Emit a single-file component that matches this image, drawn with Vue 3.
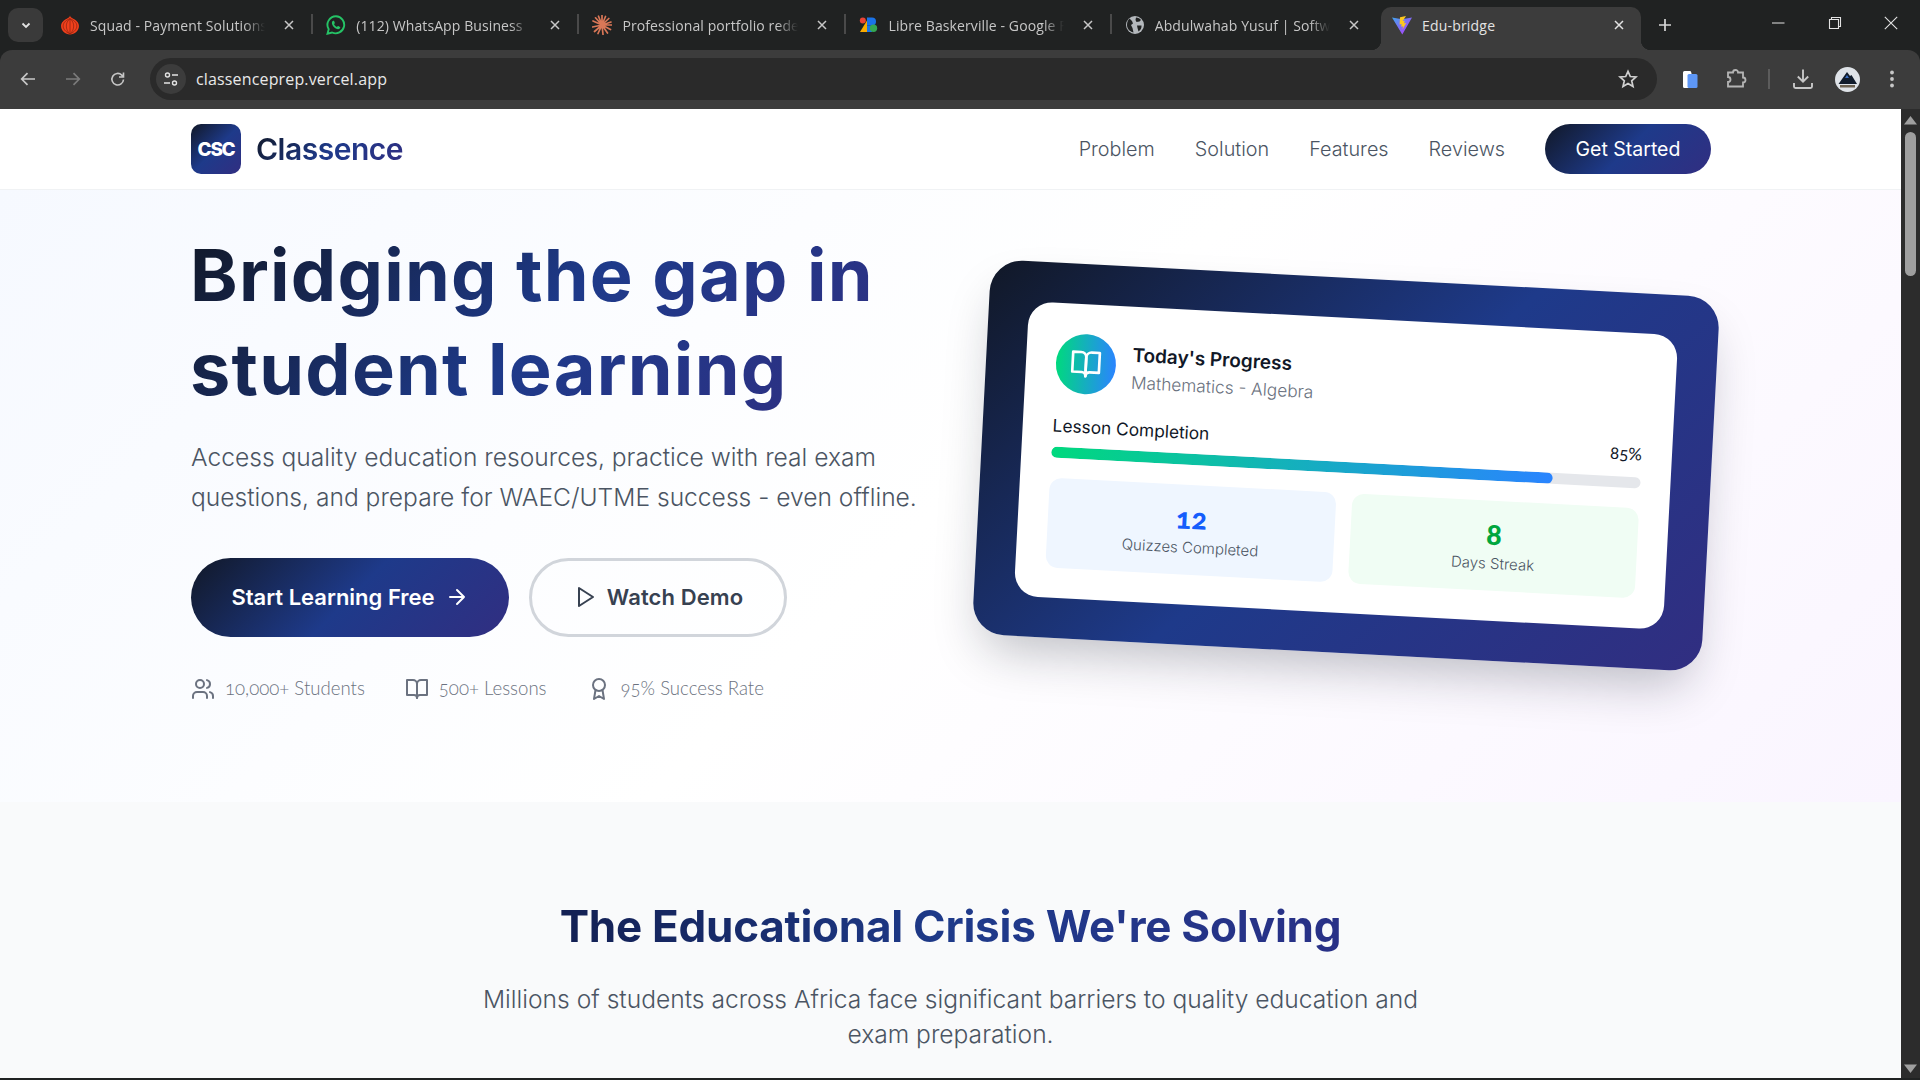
<script setup>
const tabs = [
  { id: 'onion', title: 'Squad - Payment Solutions for Africa' },
  { id: 'wa', title: '(112) WhatsApp Business' },
  { id: 'spark', title: 'Professional portfolio redesign' },
  { id: 'gf', title: 'Libre Baskerville - Google Fonts' },
  { id: 'globe', title: 'Abdulwahab Yusuf | Software Engineer' },
  { id: 'vite', title: 'Edu-bridge', active: true }
]
const links = ['Problem', 'Solution', 'Features', 'Reviews']
</script>

<template>
  <div class="window">
    <div class="strip">
      <button class="tab-search">
        <svg width="12" height="12" viewBox="0 0 12 12"><path d="M2.500 4.500 6 8l3.500-3.500" fill="none" stroke="#e3e3e3" stroke-width="1.800"/></svg>
      </button>
      <div v-for="(t, i) in tabs" :key="t.id" class="tab" :class="{ active: t.active, sep: i < 4 }">
        <svg v-if="t.id === 'onion'" class="fav" viewBox="1 .5 18 19">
          <path d="M10 1c.4 1.700 1.500 2.300 3 3 3 1.300 5.500 3.700 5.500 7 0 4.500-4 8-8.500 8s-8.500-3.500-8.500-8c0-3.300 2.500-5.700 5.500-7 1.500-.7 2.600-1.300 3-3z" fill="#f0401c"/>
          <path d="M10 4c-2.500 2-3.500 4.500-3.500 7s1 5.500 3.500 7.500M10 4c2.500 2 3.500 4.500 3.500 7s-1 5.500-3.500 7.500M10 4v15M10 4c-5 2-6.500 4.500-6.500 7s2 5.500 6.500 7.500M10 4c5 2 6.500 4.500 6.500 7s-2 5.500-6.500 7.500" fill="none" stroke="#8f2410" stroke-width=".7"/>
        </svg>
        <svg v-else-if="t.id === 'wa'" class="fav" viewBox="0 0 20 20">
          <path d="M10 1.300a8.500 8.500 0 0 0-7.300 12.900L1.500 18.700l4.600-1.200A8.500 8.500 0 1 0 10 1.300z" fill="none" stroke="#25c366" stroke-width="1.900"/>
          <path d="M7.300 5.800c-.5 0-1.400.8-1.400 2.200 0 2.700 3.400 6.200 6.200 6.200 1.400 0 2.200-1 2.200-1.700 0-.3-.1-.5-.3-.6l-1.700-.9c-.3-.1-.5 0-.7.200l-.6.800c-1.300-.5-2.500-1.600-3-2.900l.7-.7c.2-.2.200-.4.100-.6l-.7-1.700c-.1-.2-.3-.3-.8-.3z" fill="#25c366"/>
        </svg>
        <svg v-else-if="t.id === 'spark'" class="fav" viewBox="0 0 20 20">
          <path d="M10 10 10 .5M10 10l3.500-8.500M10 10l6.800-6.500M10 10l9-3M10 10h9.500M10 10l8.500 4.500M10 10l5.500 8M10 10l1 9.500M10 10l-4 8.500M10 10l-7.500 6.500M10 10l-9.500 2M10 10 1 6M10 10 3.500 2.800M10 10 6.500 1.200" stroke="#d97757" stroke-width="1.700" stroke-linecap="round"/>
        </svg>
        <svg v-else-if="t.id === 'gf'" class="fav" viewBox="0 0 20 20">
          <path d="M8 5.500 1 17h7z" fill="#f9ab00"/>
          <circle cx="3.800" cy="5.500" r="3" fill="#ea4335"/>
          <path d="M8 2.500h5a4 4 0 0 1 0 8H8z" fill="#1a73e8"/>
          <path d="M8 10.500V17h5v-6.500z" fill="#1a73e8"/>
          <circle cx="14.500" cy="13.300" r="3.700" fill="#34a853"/>
        </svg>
        <svg v-else-if="t.id === 'globe'" class="fav" viewBox="0 0 20 20">
          <circle cx="10" cy="10" r="9" fill="#b4b8bc"/>
          <path d="M4.500 3.500 7 6l1 2.500-2 1.500 1.500 3 1 4.500C4 16.500 2 13 2 10s1-5 2.500-6.500zM11 2.500c2 0 4 1 5 2.500l-1.500 1.500-3 .5-1-2zM12 10.500h4.500c.3 2.500-1 4.500-3 6l-1-3.500z" fill="#202222"/>
        </svg>
        <svg v-else class="fav" viewBox="0 0 20 20">
          <defs>
            <linearGradient id="vt" x1="0" y1="0" x2="1" y2="1"><stop offset="0" stop-color="#41a5ee"/><stop offset="1" stop-color="#bd34fe"/></linearGradient>
          </defs>
          <path d="M0 2.500 10 4.300 20 2.500 10.300 19.500z" fill="url(#vt)"/>
          <path d="M14 1 8 2.200 7.600 9.500l2-.4-.4 2.600 1.900-.5-.6 3.300 3.700-6.600-2.100.4.600-2.500-2 .3z" fill="#fdc81e"/>
        </svg>
        <span class="tab-title">{{ t.title }}</span>
        <svg class="tab-x" viewBox="0 0 12 12"><path d="M2 2l8 8M10 2l-8 8" stroke="currentColor" stroke-width="1.500"/></svg>
      </div>
      <svg class="plus" viewBox="0 0 14 14"><path d="M7 1v12M1 7h12" stroke="#d6d6d6" stroke-width="1.700"/></svg>
      <div class="caption">
        <svg viewBox="0 0 14 14"><path d="M1 7h12.500" stroke="#e3e3e3" stroke-width="1"/></svg>
        <svg viewBox="0 0 14 14"><path d="M1.500 3.500h9v9h-9zM3.500 3.500v-2h9v9h-2" fill="none" stroke="#e3e3e3" stroke-width="1.100"/></svg>
        <svg viewBox="0 0 14 14"><path d="M.8.800l12.400 12.400M13.200.800.800 13.200" stroke="#e3e3e3" stroke-width="1.100"/></svg>
      </div>
    </div>

    <div class="toolbar">
      <svg class="tool" viewBox="0 0 18 18"><path d="M16 9H3M8.500 3.200 2.700 9l5.800 5.800" fill="none" stroke="#c7c7c7" stroke-width="1.700"/></svg>
      <svg class="tool" viewBox="0 0 18 18"><path d="M2 9h13M9.500 3.200 15.300 9l-5.800 5.800" fill="none" stroke="#7b7b7b" stroke-width="1.700"/></svg>
      <svg class="tool" viewBox="0 0 18 18"><path d="M14.500 9.500a5.800 5.800 0 1 1-1.700-4.400L14.500 7M14.500 2.500V7H10" fill="none" stroke="#c7c7c7" stroke-width="1.600"/></svg>
      <div class="omnibox">
        <span class="site-chip">
          <svg width="16" height="16" viewBox="0 0 16 16"><circle cx="4.500" cy="4" r="2" fill="none" stroke="#e3e3e3" stroke-width="1.400"/><path d="M9 4h6M1 12h6" stroke="#e3e3e3" stroke-width="1.400"/><circle cx="11.500" cy="12" r="2" fill="none" stroke="#e3e3e3" stroke-width="1.400"/></svg>
        </span>
        <span class="url">classenceprep.vercel.app</span>
        <svg class="star" viewBox="0 0 20 20"><path d="M10 2.300l2.300 5.200 5.700.5-4.300 3.800 1.300 5.600-5-3-5 3 1.300-5.600L2 8l5.700-.5z" fill="none" stroke="#d0d0d0" stroke-width="1.700"/></svg>
      </div>
      <div class="tools-right">
        <svg width="20" height="20" viewBox="0 0 20 20"><path d="M3 3.500A1.500 1.500 0 0 1 4.500 2h6l1 2v15H4.500A1.500 1.500 0 0 1 3 17.500z" fill="#fff"/><rect x="7.500" y="5" width="10" height="14" rx="1.500" fill="#5e97f6"/></svg>
        <svg width="22" height="22" viewBox="0 0 22 22"><path d="M3 5h5a2.500 2.500 0 0 1 5 0h5v5a2.500 2.500 0 0 1 0 5v4H3v-4.500a2.500 2.500 0 0 0 0-5z" fill="none" stroke="#b5b5b5" stroke-width="1.800" transform="translate(0 -.5)"/></svg>
        <span class="tool-sep"></span>
        <svg width="22" height="22" viewBox="0 0 22 22"><path d="M11 1.500v12M5.800 8.500 11 13.700l5.200-5.200M2 15v3.500a1.500 1.500 0 0 0 1.500 1.500h15a1.500 1.500 0 0 0 1.500-1.500V15" fill="none" stroke="#c7c7c7" stroke-width="1.900"/></svg>
        <svg class="me" width="25" height="25" viewBox="0 0 25 25"><circle cx="12.500" cy="12.500" r="12.500" fill="#dfe3e8"/><path d="M3.500 17 12 5l3 4 1.500-1L22 17z" fill="#111c2c"/><path d="M10 11l2-3 2 3z" fill="#3b6fc4"/><rect x="5" y="18" width="15" height="2.500" fill="#6d6353"/></svg>
        <svg width="6" height="18" viewBox="0 0 6 18"><circle cx="3" cy="2.500" r="1.900" fill="#c7c7c7"/><circle cx="3" cy="9" r="1.900" fill="#c7c7c7"/><circle cx="3" cy="15.500" r="1.900" fill="#c7c7c7"/></svg>
      </div>
    </div>

    <div class="viewport">
      <div class="page">
        <header class="nav">
          <div class="brand">
            <span class="mark">CSC</span>
            <span class="wordmark">Classence</span>
          </div>
          <nav class="links">
            <a v-for="l in links" :key="l">{{ l }}</a>
            <span class="cta">Get Started</span>
          </nav>
        </header>

        <section class="hero">
          <div class="hero-left">
            <h1>Bridging the gap in student learning</h1>
            <p class="lede">Access quality education resources, practice with real exam questions, and prepare for WAEC/UTME success - even offline.</p>
            <div class="actions">
              <span class="btn primary">
                Start Learning Free
                <svg width="24" height="24" viewBox="0 0 24 24" class="ic"><path d="M5 12h14M12 5l7 7-7 7"/></svg>
              </span>
              <span class="btn ghost">
                <svg width="24" height="24" viewBox="0 0 24 24" class="ic"><polygon points="6 3 20 12 6 21 6 3"/></svg>
                Watch Demo
              </span>
            </div>
            <div class="facts">
              <span class="fact">
                <svg width="24" height="24" viewBox="0 0 24 24" class="ic"><path d="M16 21v-2a4 4 0 0 0-4-4H6a4 4 0 0 0-4 4v2"/><circle cx="9" cy="7" r="4"/><path d="M22 21v-2a4 4 0 0 0-3-3.870M16 3.130a4 4 0 0 1 0 7.750"/></svg>
                <span class="fact-text">10,000+ Students</span>
              </span>
              <span class="fact">
                <svg width="24" height="24" viewBox="0 0 24 24" class="ic"><path d="M2 3h6a4 4 0 0 1 4 4v14a3 3 0 0 0-3-3H2z"/><path d="M22 3h-6a4 4 0 0 0-4 4v14a3 3 0 0 1 3-3h7z"/></svg>
                <span class="fact-text">500+ Lessons</span>
              </span>
              <span class="fact">
                <svg width="24" height="24" viewBox="0 0 24 24" class="ic"><circle cx="12" cy="8" r="6"/><path d="M15.477 12.890 17 22l-5-3-5 3 1.523-9.110"/></svg>
                <span class="fact-text">95% Success Rate</span>
              </span>
            </div>
          </div>

          <div class="showcase">
            <div class="frame">
              <div class="panel">
                <div class="panel-head">
                  <span class="avatar">
                    <svg width="32" height="32" viewBox="0 0 24 24" class="ic"><path d="M2 3h6a4 4 0 0 1 4 4v14a3 3 0 0 0-3-3H2z"/><path d="M22 3h-6a4 4 0 0 0-4 4v14a3 3 0 0 1 3-3h7z"/></svg>
                  </span>
                  <div class="panel-text">
                    <div class="panel-title">Today's Progress</div>
                    <div class="panel-sub">Mathematics - Algebra</div>
                  </div>
                </div>
                <div class="progress-label"><span>Lesson Completion</span><span class="pct">85%</span></div>
                <div class="track"><div class="fill" :style="{ width: '85%' }"></div></div>
                <div class="tiles">
                  <div class="tile blue"><strong>12</strong><span>Quizzes Completed</span></div>
                  <div class="tile green"><strong>8</strong><span>Days Streak</span></div>
                </div>
              </div>
            </div>
          </div>
        </section>

        <section class="crisis">
          <h2>The Educational Crisis We're Solving</h2>
          <p>Millions of students across Africa face significant barriers to quality education and exam preparation.</p>
        </section>
      </div>

      <div class="scrollbar">
        <svg width="13" height="10" viewBox="0 0 13 10"><path d="M6.500 1 13 9.500H0z" fill="#9f9f9f"/></svg>
        <span class="thumb"></span>
        <svg class="down" width="13" height="10" viewBox="0 0 13 10"><path d="M6.500 9 13 .5H0z" fill="#9f9f9f"/></svg>
      </div>
    </div>
  </div>
</template>

<style>
html, body { margin: 0; background: #202222; }
</style>

<style scoped>
.window { width: 1920px; height: 1080px; overflow: hidden; display: flex; flex-direction: column; background: #202222; font-family: Inter, Lato, sans-serif; }

.strip { height: 50px; display: flex; align-items: flex-end; flex: none; padding-left: 8px; box-sizing: border-box; }
.tab-search { width: 35px; height: 34px; align-self: flex-start; margin-top: 8px; border: 0; border-radius: 10px; background: #3a3a3a; display: flex; align-items: center; justify-content: center; padding: 0; flex: none; }
.tab { width: 266.200px; height: 43px; box-sizing: border-box; padding: 0 12px 7px 11px; display: flex; align-items: center; color: #c7c7c7; position: relative; flex: none; font: 14px "Open Sans", sans-serif; letter-spacing: .1px; }
.tab:first-of-type { margin-left: 6px; }
.tab.sep::after { content: ""; position: absolute; right: 2px; top: 7px; width: 2px; height: 20px; background: #4a4a4a; }
.tab.active { width: 260px; background: #3c3c3c; border-radius: 10px 10px 0 0; color: #e3e3e3; margin-left: 1px; letter-spacing: .2px; }
.tab.active::before { content: ""; position: absolute; left: -10px; bottom: 0; width: 10px; height: 10px; background: radial-gradient(circle at 0 0, transparent 10px, #3c3c3c 10.500px); }
.tab.active::after { content: ""; position: absolute; right: -10px; bottom: 0; width: 10px; height: 10px; background: radial-gradient(circle at 100% 0, transparent 10px, #3c3c3c 10.500px); }
.fav { width: 20px; height: 20px; flex: none; }
.tab-title { flex: 1; min-width: 0; white-space: nowrap; overflow: hidden; margin-left: 10px; -webkit-mask-image: linear-gradient(90deg, #000 88%, transparent 100%); mask-image: linear-gradient(90deg, #000 88%, transparent 100%); }
.active .tab-title { -webkit-mask-image: none; mask-image: none; }
.tab-x { width: 12px; height: 12px; flex: none; margin-left: 18px; margin-right: 8px; }
.active .tab-x { margin-right: 4px; }
.plus { width: 14px; height: 14px; margin: 0 0 18px 17px; flex: none; }
.caption { margin-left: auto; align-self: flex-start; display: flex; gap: 42px; padding: 16px 22px 0 0; }
.caption svg { width: 14px; height: 14px; }
.caption svg:first-child { margin-right: 1px; }

.toolbar { height: 59px; flex: none; background: #3c3c3c; border-radius: 12px 12px 0 0; display: flex; align-items: center; padding: 0 0 1px 19px; box-sizing: border-box; }
.tool { width: 18px; height: 18px; margin-right: 27px; flex: none; }
.tool:nth-child(3) { margin-right: 23px; }
.omnibox { width: 1507px; height: 42px; background: #2a2a2a; border-radius: 21px; display: flex; align-items: center; padding: 0 19px 0 6px; box-sizing: border-box; flex: none; }
.site-chip { width: 30px; height: 30px; border-radius: 50%; background: #3c3c3c; display: flex; align-items: center; justify-content: center; flex: none; }
.url { color: #e8e8e8; font: 16px "Open Sans", sans-serif; letter-spacing: .15px; margin-left: 10px; }
.star { width: 20px; height: 20px; margin-left: auto; }
.tools-right { display: flex; align-items: center; margin-left: 23px; }
.tools-right > :nth-child(2) { margin-left: 25px; }
.tool-sep { width: 2px; height: 20px; background: #5c5c5c; margin-left: 21px; }
.tools-right > :nth-child(4) { margin-left: 22px; }
.me { margin-left: 21px; }
.tools-right > :nth-child(6) { margin-left: 29px; }

.viewport { height: 969px; flex: none; display: flex; background: #f9fafb; }
.page { width: 1901px; flex: none; overflow: hidden; height: 969px; }
.scrollbar { width: 19px; background: #2c2c2c; display: flex; flex-direction: column; align-items: center; padding-top: 6px; box-sizing: border-box; }
.thumb { width: 11px; height: 144px; border-radius: 6px; background: #9f9f9f; margin-top: 7px; }
.down { margin-top: auto; margin-bottom: 4px; }

.nav { height: 81px; box-sizing: border-box; background: #fff; border-bottom: 1px solid #f0f2f4; padding: 15px 190px 0 191px; display: flex; justify-content: space-between; align-items: flex-start; }
.brand { display: flex; align-items: center; gap: 15px; }
.mark { width: 50px; height: 50px; border-radius: 10px; background: linear-gradient(135deg, #111827, #1e3a8a 50%, #312e81); color: #fff; font-weight: 800; font-size: 19px; letter-spacing: -1.300px; display: flex; align-items: center; justify-content: center; }
.wordmark { font-size: 30px; font-weight: 600; letter-spacing: -.5px; background: linear-gradient(135deg, #111827, #1e3a8a 50%, #312e81); -webkit-background-clip: text; background-clip: text; color: transparent; }
.links { display: flex; align-items: center; height: 50px; gap: 40px; font-size: 19.800px; font-weight: 300; color: #4b5563; }
.cta { width: 166px; height: 50px; border-radius: 25px; background: linear-gradient(135deg, #111827, #1e3a8a 50%, #312e81); color: #fff; display: flex; align-items: center; justify-content: center; font-size: 19.500px; font-weight: 400; }

.hero { height: 612px; box-sizing: border-box; padding: 38px 190px 0 191px; display: grid; grid-template-columns: 730px 730px; column-gap: 60px; align-items: start; background: linear-gradient(135deg, #f6f9ff 0%, #ffffff 50%, #faf5ff 100%); }
.hero h1 { margin: 0 0 0 -1px; font-size: 72px; line-height: 93.600px; font-weight: 700; letter-spacing: 1.250px; background: linear-gradient(135deg, #111827, #1e3a8a 50%, #312e81); -webkit-background-clip: text; background-clip: text; color: transparent; width: 720px; }
.lede { margin: 22px 0 0; font-size: 24.600px; line-height: 40px; color: #4b5563; font-weight: 300; width: 745px; }
.actions { display: flex; gap: 20px; margin-top: 41px; }
.btn { height: 79px; box-sizing: border-box; border-radius: 40px; display: flex; align-items: center; justify-content: center; font-size: 22px; font-weight: 600; gap: 10px; padding-bottom: 2px; }
.btn.primary { width: 318px; background: linear-gradient(135deg, #111827, #1e3a8a 50%, #312e81); color: #fff; }
.btn.ghost { width: 258px; border: 3px solid #d1d5db; color: #374151; letter-spacing: .1px; }
.ic { fill: none; stroke: currentColor; stroke-width: 2; stroke-linecap: round; stroke-linejoin: round; flex: none; }
.facts { display: flex; gap: 40px; margin-top: 40px; color: #6b7280; font-family: Lato, sans-serif; font-size: 18.600px; font-weight: 300; font-feature-settings: "onum"; }
.fact { display: flex; align-items: center; gap: 10px; height: 24px; }
.fact-text { margin-top: -2px; }

.showcase { height: 475px; display: flex; align-items: center; justify-content: center; }
.frame { width: 730px; height: 375px; box-sizing: border-box; padding: 40px; border-radius: 32px; background: linear-gradient(135deg, #111827, #1e3a8a 50%, #312e81); box-shadow: 0 25px 50px -12px rgba(17, 24, 39, .28); transform: rotate(3deg); }
.panel { height: 295px; box-sizing: border-box; padding: 30px; border-radius: 24px; background: #fff; }
.panel-head { display: flex; align-items: center; gap: 16px; height: 60px; margin-bottom: 19px; }
.avatar { width: 60px; height: 60px; border-radius: 50%; background: linear-gradient(90deg, #00d97e, #2a84ff); color: #fff; display: flex; align-items: center; justify-content: center; flex: none; }
.panel-text { padding-top: 3px; }
.panel-title { font-size: 19px; font-weight: 600; color: #111827; line-height: 28px; }
.panel-sub { font-size: 17.300px; font-weight: 300; color: #6b7280; line-height: 26px; }
.progress-label { display: flex; justify-content: space-between; font-size: 17.300px; font-weight: 400; height: 27px; line-height: 27px; margin-bottom: 8px; color: #111827; }
.pct { font-family: Lato, sans-serif; font-size: 17px; font-weight: 400; font-feature-settings: "onum"; margin-top: -2px; }
.track { height: 11px; border-radius: 6px; background: #e5e7eb; overflow: hidden; margin-bottom: 20px; }
.fill { height: 100%; border-radius: 6px; background: linear-gradient(90deg, #00d97e, #2a84ff); }
.tiles { display: grid; grid-template-columns: 1fr 1fr; gap: 16px; }
.tile { height: 90px; border-radius: 12px; display: flex; flex-direction: column; align-items: center; justify-content: center; font-size: 15px; color: #4b5563; font-weight: 300; }
.tile strong { font-family: Lato, sans-serif; font-size: 29px; line-height: 36px; font-weight: 900; font-feature-settings: "onum"; }
.tile span { line-height: 24px; }
.tile.blue { background: #eff6ff; }
.tile.blue strong { color: #155dfc; }
.tile.green { background: #f0fdf4; }
.tile.green strong { color: #00a63e; }

.crisis { text-align: center; padding-top: 93px; }
.crisis h2 { margin: 0 auto; width: 900px; font-size: 44px; line-height: 62px; font-weight: 700; letter-spacing: -.25px; background: linear-gradient(90deg, #111c4a, #1e3a8a 50%, #2a2f86); -webkit-background-clip: text; background-clip: text; color: transparent; }
.crisis p { margin: 25px auto 0; width: 980px; font-size: 24.600px; line-height: 35px; font-weight: 300; color: #4b5563; }
</style>
